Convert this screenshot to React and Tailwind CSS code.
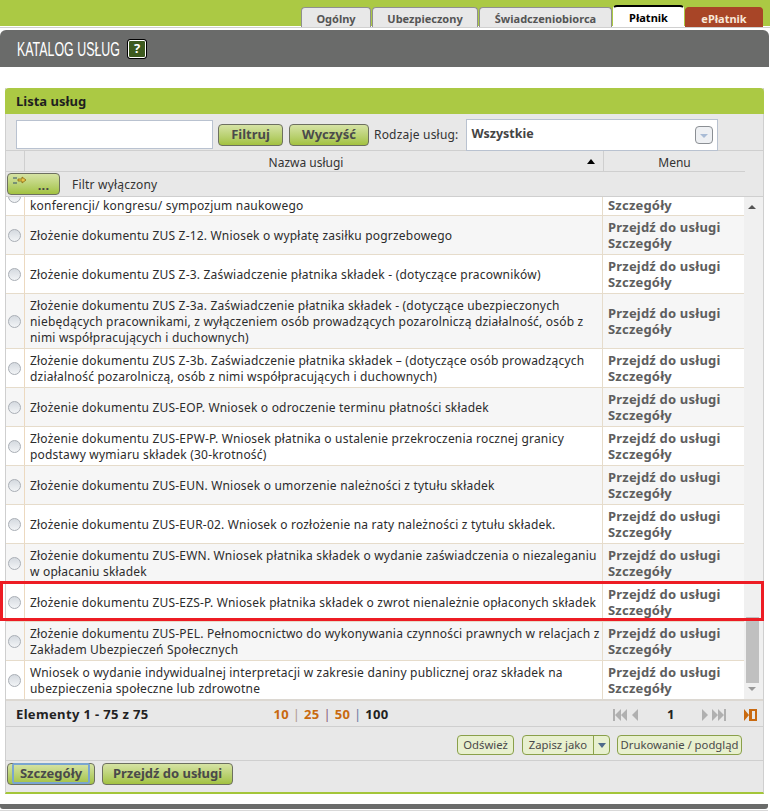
import React from 'react'

const font = "font-['Noto_Sans',sans-serif]"

const rows = [
  { lines: ['Złożenie dokumentu ZUS Z-12. Wniosek o wypłatę zasiłku pogrzebowego'] },
  { lines: ['Złożenie dokumentu ZUS Z-3. Zaświadczenie płatnika składek - (dotyczące pracowników)'] },
  { lines: ['Złożenie dokumentu ZUS Z-3a. Zaświadczenie płatnika składek - (dotyczące ubezpieczonych', 'niebędących pracownikami, z wyłączeniem osób prowadzących pozarolniczą działalność, osób z', 'nimi współpracujących i duchownych)'], tall: true },
  { lines: ['Złożenie dokumentu ZUS Z-3b. Zaświadczenie płatnika składek – (dotyczące osób prowadzących', 'działalność pozarolniczą, osób z nimi współpracujących i duchownych)'] },
  { lines: ['Złożenie dokumentu ZUS-EOP. Wniosek o odroczenie terminu płatności składek'] },
  { lines: ['Złożenie dokumentu ZUS-EPW-P. Wniosek płatnika o ustalenie przekroczenia rocznej granicy', 'podstawy wymiaru składek (30-krotność)'] },
  { lines: ['Złożenie dokumentu ZUS-EUN. Wniosek o umorzenie należności z tytułu składek'] },
  { lines: ['Złożenie dokumentu ZUS-EUR-02. Wniosek o rozłożenie na raty należności z tytułu składek.'] },
  { lines: ['Złożenie dokumentu ZUS-EWN. Wniosek płatnika składek o wydanie zaświadczenia o niezaleganiu', 'w opłacaniu składek'] },
  { lines: ['Złożenie dokumentu ZUS-EZS-P. Wniosek płatnika składek o zwrot nienależnie opłaconych składek'] },
  { lines: ['Złożenie dokumentu ZUS-PEL. Pełnomocnictwo do wykonywania czynności prawnych w relacjach z', 'Zakładem Ubezpieczeń Społecznych'] },
  { lines: ['Wniosek o wydanie indywidualnej interpretacji w zakresie daniny publicznej oraz składek na', 'ubezpieczenia społeczne lub zdrowotne'] },
]

function Tab({ label, className }) {
  return (
    <div className={`h-[20px] mr-px pt-[3px] flex items-center justify-center rounded-t-[4px] border border-b-0 text-[11px] font-bold ${className}`}>
      {label}
    </div>
  )
}

function Radio() {
  return <div className="w-[13px] h-[13px] rounded-full border border-[#a9aeb5] bg-gradient-to-b from-[#d5dae0] to-[#f2f4f6]" />
}

function Row({ row, shaded }) {
  return (
    <div className={`flex border-b border-[#e6dccb] ${row.tall ? 'h-[55px]' : 'h-[39px]'} ${shaded ? 'bg-[#f6f6f6]' : 'bg-white'}`}>
      <div className="w-[19px] shrink-0 pr-px flex items-center justify-center border-r border-[#ecd9c0]">
        <Radio />
      </div>
      <div className="w-[577px] shrink-0 pl-[5px] pt-[2px] flex flex-col justify-center text-[12px] leading-[16px] tracking-[0.2px] text-[#2c2c2c] whitespace-nowrap">
        {row.lines.map((line) => <div key={line}>{line}</div>)}
      </div>
      <div className="flex-1 border-l border-[#e6dccb] pl-[5px] flex flex-col justify-center text-[13px] leading-[16px] tracking-[0.2px] font-bold text-[#5e5e5e] whitespace-nowrap">
        <div>Przejdź do usługi</div>
        <div>Szczegóły</div>
      </div>
    </div>
  )
}

function GreenButton({ children, className }) {
  return (
    <button className={`h-[22px] rounded-[4px] border border-[#6d7060] bg-gradient-to-b from-[#d6e3a4] to-[#a3c23f] text-[13px] font-bold text-[#4a4a4a] ${className}`}>
      {children}
    </button>
  )
}

function LightButton({ children, className }) {
  return (
    <button className={`h-[20px] rounded-[4px] border border-[#8aa04a] bg-[#e8f0cf] text-[11.3px] text-[#4a4a4a] ${className}`}>
      {children}
    </button>
  )
}

function PagerIcon({ d, width, className }) {
  return (
    <svg width={width} height="12" viewBox={`0 0 ${width} 12`} className={className}>
      <path d={d} fill="currentColor" />
    </svg>
  )
}

export default function App() {
  return (
    <div className={`w-[770px] h-[812px] overflow-hidden bg-white relative ${font}`}>
      <div className="h-[26px] bg-[#abc944] flex justify-end items-start pr-[6px] pt-[7px]">
        <Tab label="Ogólny" className="w-[70px] bg-[#e8e8e8] border-[#8f8f8f] text-[#555]" />
        <Tab label="Ubezpieczony" className="w-[106px] bg-[#e8e8e8] border-[#8f8f8f] text-[#555]" />
        <Tab label="Świadczeniobiorca" className="w-[133px] bg-[#e8e8e8] border-[#8f8f8f] text-[#555]" />
        <Tab label="Płatnik" className="w-[71px] h-[22px] -mt-[2px] bg-white border-white border-t-[2px] border-t-black text-black" />
        <Tab label="ePłatnik" className="w-[78px] mr-0 bg-[#a84527] border-[#a84527] text-[#f8e8d8]" />
      </div>
      <div className="h-[4px] pt-px bg-white">
        <div className="h-px bg-[#d0d0d0]" />
      </div>
      <div className="h-[37px] w-[769px] bg-[#6a6b6a] rounded-t-[6px] flex items-center pl-[17px]">
        <span className="font-['Liberation_Sans',sans-serif] text-[20px] text-white scale-x-[0.62] origin-left w-[102px] whitespace-nowrap">KATALOG USŁUG</span>
        <span className="ml-[9px] w-[18px] h-[18px] rounded-[2px] border border-white outline outline-black bg-[#3d5a1e] text-white text-[13px] font-bold flex items-center justify-center">?</span>
      </div>

      <div className="mt-[21px] ml-[5px] w-[759px] border-x border-[#cfcfcf] border-b-[2px] border-b-[#a4c63a] bg-[#e8e8e8]">
        <div className="h-[26px] -mx-px pt-[2px] bg-[#abc944] rounded-t-[4px] pl-[11px] flex items-center text-[13px] font-bold text-[#1f1f1f]">Lista usług</div>

        <div className="h-[37px] pt-[5px] flex items-center pl-[10px] border-b border-[#cfcfcf]">
          <div className="w-[197px] h-[29px] bg-white border border-[#b9c2d0]" />
          <GreenButton className="ml-[5px] w-[65px]">Filtruj</GreenButton>
          <GreenButton className="ml-[6px] w-[80px]">Wyczyść</GreenButton>
          <span className="ml-[5px] text-[12px] tracking-[0.2px] text-[#333]">Rodzaje usług:</span>
          <div className="ml-[7px] w-[252px] h-[32px] bg-white border border-[#b9c2d0] flex items-center justify-between pl-[5px] pr-[4px] text-[12.5px] font-bold text-[#444]">
            Wszystkie
            <span className="w-[18px] h-[18px] rounded-[4px] border border-[#8b8f94] bg-[#eef0f3] flex items-center justify-center">
              <span className="mt-[2px] border-x-[4px] border-x-transparent border-t-[4px] border-t-[#a9bcd6]" />
            </span>
          </div>
        </div>

        <div className="h-[21px] w-[739px] flex border-b border-[#cfcfcf] text-[12px] text-[#333]">
          <div className="w-[19px] border-r border-[#cfcfcf]" />
          <div className="w-[579px] pt-[3px] pr-[16px] relative flex items-center justify-center border-r border-[#cfcfcf]">
            Nazwa usługi
            <span className="absolute right-[8px] top-[8px] border-x-[4px] border-x-transparent border-b-[5px] border-b-black" />
          </div>
          <div className="flex-1 pt-[3px] flex items-center justify-center">Menu</div>
        </div>

        <div className="h-[25px] flex items-center border-b border-[#cfcfcf] text-[12px] text-[#333] tracking-[0.2px]">
          <GreenButton className="ml-[1px] w-[53px] relative">
            <svg width="14" height="10" viewBox="0 0 14 10" className="absolute left-[5px] top-[2px]">
              <path d="M5 3h4V1l4 3-4 3V5H5z" fill="#e8c44a" stroke="#8a6a10" strokeWidth="0.8" />
              <path d="M0 2h4M0 7h4" stroke="#33506e" strokeWidth="1.2" />
            </svg>
            <span className="relative left-[10px] top-[2px] text-[#444]">...</span>
          </GreenButton>
          <span className="ml-[12px] pt-[2px]">Filtr wyłączony</span>
        </div>

        <div className="flex">
          <div className="w-[738px] h-[502px] overflow-hidden">
            <div className="h-[19px] overflow-hidden border-b border-[#e6dccb] bg-white">
              <div className="flex -mt-[20px] h-[39px]">
                <div className="w-[19px] shrink-0 pr-px flex items-center justify-center border-r border-[#ecd9c0]">
                  <Radio />
                </div>
                <div className="w-[577px] shrink-0 pl-[5px] pt-[21px] text-[12px] leading-[16px] tracking-[0.2px] text-[#2c2c2c]">konferencji/ kongresu/ sympozjum naukowego</div>
                <div className="flex-1 border-l border-[#e6dccb] pl-[5px] pt-[20px] text-[13px] leading-[16px] tracking-[0.2px] font-bold text-[#5e5e5e]">Szczegóły</div>
              </div>
            </div>
            {rows.map((row, i) => <Row key={row.lines[0]} row={row} shaded={i % 2 === 0} />)}
          </div>
          <div className="w-[19px] h-[502px] bg-[#f0f0f0] pr-[3px] flex flex-col items-center justify-between py-[8px] relative">
            <span className="border-x-[4px] border-x-transparent border-b-[4px] border-b-[#555]" />
            <div className="absolute left-[2px] top-[420px] w-[13px] h-[66px] bg-[#c0c0c0]" />
            <span className="border-x-[4px] border-x-transparent border-t-[4px] border-t-[#999]" />
          </div>
        </div>

        <div className="h-[28px] border-t-2 border-[#dcd8d2] border-b border-b-[#cfcfcf] flex items-center pl-[10px] pt-[2px] text-[13px] tracking-[0.35px] font-bold text-[#222]">
          <span>Elementy 1 - 75 z 75</span>
          <span className="ml-[125px] text-[#c96a10]">10 <span className="font-normal text-[#b09a90]">|</span> 25 <span className="font-normal text-[#8a5a7a]">|</span> 50 <span className="font-normal text-[#6a78a0]">|</span> <span className="text-[#222]">100</span></span>
          <div className="ml-auto flex items-center pr-[6px] text-[#b0b0b0]">
            <PagerIcon width="14" d="M0 0h2v12H0zM8 0v12L2 6zM14 0v12L8 6z" />
            <PagerIcon width="6" d="M6 0v12L0 6z" className="ml-[5px]" />
            <span className="ml-[29px] w-[8px] text-[#222]">1</span>
            <PagerIcon width="6" d="M0 0v12l6-6z" className="ml-[27px]" />
            <PagerIcon width="14" d="M0 0v12l6-6zM6 0v12l6-6zM12 0h2v12h-2z" className="ml-[4px]" />
            <svg width="13" height="12" viewBox="0 0 13 12" className="ml-[18px]">
              <path d="M0 0l5 6-5 6zM5 0h8v12H5zM8 2v8h3V2z" fill="#c96a10" fillRule="evenodd" />
            </svg>
          </div>
        </div>

        <div className="h-[34px] pt-[3px] border-b border-[#cfcfcf] flex items-center justify-end pr-[21px]">
          <LightButton className="w-[57px]">Odśwież</LightButton>
          <LightButton className="ml-[8px] w-[88px] flex items-center">
            <span className="flex-1">Zapisz jako</span>
            <span className="w-[16px] h-full border-l border-[#8aa04a] flex items-center justify-center">
              <span className="border-x-[4px] border-x-transparent border-t-[5px] border-t-[#4f6a8a]" />
            </span>
          </LightButton>
          <LightButton className="ml-[7px] w-[125px]">Drukowanie / podgląd</LightButton>
        </div>

        <div className="h-[31px] pb-[5px] flex items-center">
          <GreenButton className="ml-[1px] w-[88px] relative">
            <span className="absolute left-[4px] -top-px bottom-0 right-[4px] border-2 border-[#7aa5d0] rounded-[2px]" />
            Szczegóły
          </GreenButton>
          <GreenButton className="ml-[7px] w-[131px]">Przejdź do usługi</GreenButton>
        </div>
      </div>

      <div className="mt-[10px] h-[5px] w-[768px] bg-[#6a6b6a] rounded-b-[3px]" />
      <div className="mt-px h-px w-[768px] bg-[#d8d8d8]" />
      <div className="absolute left-0 top-[581px] w-[764px] h-[40px] border-[3px] border-[#ed1c24]" />
    </div>
  )
}
